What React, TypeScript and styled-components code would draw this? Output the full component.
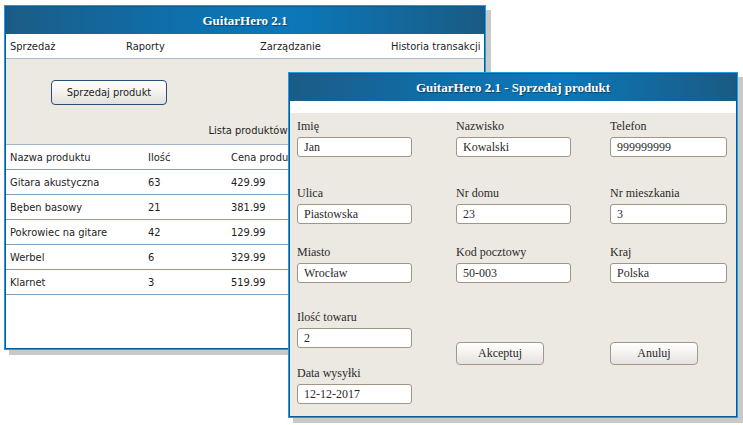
import React from "react";
import styled, { createGlobalStyle } from "styled-components";

const Global = createGlobalStyle`
  html, body { margin: 0; padding: 0; background: #ffffff; }
  body { width: 743px; height: 425px; overflow: hidden; }
  * { box-sizing: border-box; }
`;

const Desktop = styled.div`
  position: relative;
  width: 743px;
  height: 425px;
  background: #ffffff;
`;

const Window = styled.div<{ $x: number; $y: number; $w: number; $h: number }>`
  position: absolute;
  left: ${(p) => p.$x}px;
  top: ${(p) => p.$y}px;
  width: ${(p) => p.$w}px;
  height: ${(p) => p.$h}px;
  display: flex;
  flex-direction: column;
  border: 1px solid #1f9be8;
  box-shadow: inset 0 0 0 1px #0d5a93, 5px 5px 0 #c9c9c9;
  padding: 1px;
  background: #ece9e2;
`;

const TitleBar = styled.div`
  height: 27px;
  flex: none;
  display: flex;
  align-items: center;
  justify-content: center;
  background: linear-gradient(90deg, #1b5c86 0%, #0f6fab 35%, #0b78ba 60%, #1a5b84 100%);
  color: #ffffff;
  font-family: "Liberation Serif", "Times New Roman", serif;
  font-weight: bold;
  font-size: 13px;
  text-shadow: 1px 1px 1px rgba(0, 0, 0, 0.45);
`;

const MenuBar = styled.div`
  height: 25px;
  flex: none;
  display: grid;
  grid-template-columns: 116px 134px 131px 1fr;
  align-items: center;
  padding: 0 4px 0 4px;
  background: #ffffff;
  border-bottom: 1px solid #a9bccd;
  font-family: "DejaVu Sans Condensed", "Liberation Sans", sans-serif;
  font-size: 11px;
  color: #1e1e1e;
  white-space: nowrap;
`;

const MenuItem = styled.span<{ $end?: boolean }>`
  justify-self: ${(p) => (p.$end ? "end" : "start")};
`;

const MainBody = styled.div`
  flex: 1;
  display: flex;
  flex-direction: column;
  font-family: "DejaVu Sans Condensed", "Liberation Sans", sans-serif;
  font-size: 11px;
  color: #1e1e1e;
`;

const Toolbar = styled.div`
  height: 85px;
  flex: none;
  display: flex;
  flex-direction: column;
  padding: 21px 0 0 45px;
`;

const PrimaryButton = styled.button`
  width: 116px;
  height: 25px;
  border: 1px solid #274f77;
  border-radius: 4px;
  background: linear-gradient(180deg, #ffffff 0%, #f3f2ef 50%, #e2e0db 100%);
  font-family: inherit;
  font-size: 11px;
  color: #1e1e1e;
  padding: 0;
`;

const Caption = styled.div`
  margin-top: 19px;
  align-self: stretch;
  margin-left: -45px;
  padding-left: 6px;
  text-align: center;
  line-height: 14px;
`;

const Table = styled.div`
  flex: 1;
  background: #ffffff;
  border-top: 1px solid #9fb4c8;
`;

const Row = styled.div`
  height: 25px;
  display: grid;
  grid-template-columns: 138px 83px 1fr;
  align-items: center;
  padding-left: 4px;
  border-bottom: 1px solid #7f9fbf;
  white-space: nowrap;
`;

const DialogBody = styled.div`
  flex: 1;
  display: flex;
  flex-direction: column;
`;

const WhiteStrip = styled.div`
  height: 12px;
  flex: none;
  background: #ffffff;
`;

const Form = styled.div`
  flex: 1;
  display: grid;
  grid-template-columns: 159px 154px 117px;
  grid-template-rows: 67px 59px 65px 56px 39px;
  padding: 5px 0 0 7px;
  font-family: "Liberation Serif", "Times New Roman", serif;
  font-size: 12px;
  color: #2a2a2a;
`;

const Field = styled.div`
  display: flex;
  flex-direction: column;
  align-items: flex-start;
`;

const Label = styled.div`
  height: 16px;
  line-height: 16px;
  margin-bottom: 3px;
`;

const Input = styled.div<{ $w?: number }>`
  width: ${(p) => p.$w ?? 115}px;
  height: 20px;
  line-height: 18px;
  padding-left: 6px;
  border: 1px solid #a39584;
  border-radius: 3px;
  background: #ffffff;
`;

const FormButton = styled.button`
  align-self: end;
  width: 88px;
  height: 23px;
  border: 1px solid #a49786;
  border-radius: 4px;
  background: linear-gradient(180deg, #ffffff 0%, #f4f3f1 45%, #e4e2de 100%);
  font-family: "Liberation Serif", "Times New Roman", serif;
  font-size: 12px;
  color: #2a2a2a;
  padding: 0;
`;

const products = [
  ["Gitara akustyczna", "63", "429.99"],
  ["Bęben basowy", "21", "381.99"],
  ["Pokrowiec na gitare", "42", "129.99"],
  ["Werbel", "6", "329.99"],
  ["Klarnet", "3", "519.99"],
];

const fields: [string, string][] = [
  ["Imię", "Jan"],
  ["Nazwisko", "Kowalski"],
  ["Telefon", "999999999"],
  ["Ulica", "Piastowska"],
  ["Nr domu", "23"],
  ["Nr mieszkania", "3"],
  ["Miasto", "Wrocław"],
  ["Kod pocztowy", "50-003"],
  ["Kraj", "Polska"],
];

export default function App() {
  return (
    <Desktop>
      <Global />
      <Window $x={4} $y={5} $w={482} $h={345}>
        <TitleBar>GuitarHero 2.1</TitleBar>
        <MenuBar>
          <MenuItem>Sprzedaż</MenuItem>
          <MenuItem>Raporty</MenuItem>
          <MenuItem>Zarządzanie</MenuItem>
          <MenuItem $end>Historia transakcji</MenuItem>
        </MenuBar>
        <MainBody>
          <Toolbar>
            <PrimaryButton>Sprzedaj produkt</PrimaryButton>
            <Caption>Lista produktów</Caption>
          </Toolbar>
          <Table>
            <Row>
              <span>Nazwa produktu</span>
              <span>Ilość</span>
              <span>Cena produktu</span>
            </Row>
            {products.map((p) => (
              <Row key={p[0]}>
                <span>{p[0]}</span>
                <span>{p[1]}</span>
                <span>{p[2]}</span>
              </Row>
            ))}
          </Table>
        </MainBody>
      </Window>
      <Window $x={288} $y={72} $w={450} $h={346}>
        <TitleBar>GuitarHero 2.1 - Sprzedaj produkt</TitleBar>
        <DialogBody>
          <WhiteStrip />
          <Form>
            {fields.map(([l, v], i) => (
              <Field key={l}>
                <Label>{l}</Label>
                <Input $w={i % 3 === 2 ? 117 : 115}>{v}</Input>
              </Field>
            ))}
            <Field>
              <Label>Ilość towaru</Label>
              <Input>2</Input>
            </Field>
            <FormButton>Akceptuj</FormButton>
            <FormButton>Anuluj</FormButton>
            <Field>
              <Label>Data wysyłki</Label>
              <Input>12-12-2017</Input>
            </Field>
          </Form>
        </DialogBody>
      </Window>
    </Desktop>
  );
}
